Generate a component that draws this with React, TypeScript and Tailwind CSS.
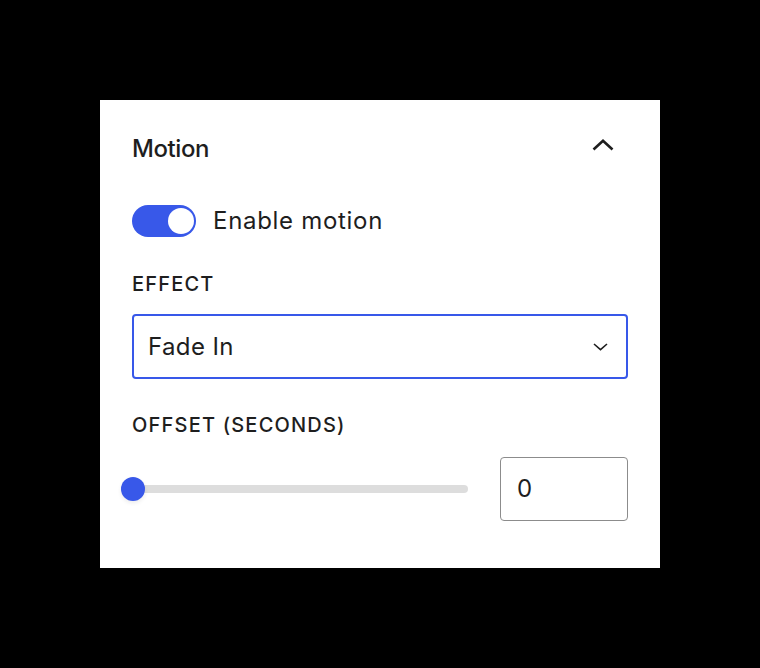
import React from 'react';

const font = { fontFamily: 'Inter, "Noto Sans", sans-serif' };

const App = () => {
  return (
    <div className="w-[760px] h-[668px] bg-black flex items-center justify-center" style={font}>
      <div className="w-[560px] h-[468px] bg-white px-8 pt-[33px] text-[#1e1e1e]">
        {/* Header */}
        <div className="flex items-start justify-between h-8">
          <span className="text-[24px] leading-8 font-medium tracking-[-0.4px]">Motion</span>
          <svg className="mt-[6px] mr-[14px]" width="22" height="12" viewBox="0 0 22 12" fill="none">
            <polyline points="1.5,10.5 11,1.8 20.5,10.5" stroke="#1e1e1e" strokeWidth="2.6" />
          </svg>
        </div>

        {/* Toggle */}
        <div className="flex items-center mt-10 h-8">
          <div className="w-16 h-8 rounded-full bg-[#3858e9] flex items-center justify-end pr-[2px]">
            <div className="w-[26px] h-[26px] rounded-full bg-white" />
          </div>
          <span className="ml-[17px] text-[24px] leading-8 tracking-[0.7px]">Enable motion</span>
        </div>

        {/* Effect */}
        <div className="mt-[33px] text-[20px] leading-7 font-medium uppercase tracking-[1.2px]">Effect</div>
        <div className="mt-[16px] h-[65px] border-2 border-[#3858e9] rounded flex items-center justify-between pl-[14px] pr-[18px]">
          <span className="text-[24px] leading-8 tracking-[0.4px]">Fade In</span>
          <svg width="15" height="8" viewBox="0 0 15 8" fill="none">
            <polyline points="1,1 7.5,6.6 14,1" stroke="#1e1e1e" strokeWidth="1.6" />
          </svg>
        </div>

        {/* Offset */}
        <div className="mt-8 text-[20px] leading-7 font-medium uppercase tracking-[1.2px]">Offset (seconds)</div>
        <div className="mt-[18px] flex items-center">
          <div className="relative flex-1 ml-[-11px] mr-8 h-6 flex items-center">
            <div className="w-full h-2 rounded-full bg-[#dddddd]" />
            <div className="absolute left-0 top-0 w-6 h-6 rounded-full bg-[#3858e9] shadow-[0_2px_4px_rgba(0,0,0,0.08)]" />
          </div>
          <div className="w-32 h-16 border border-[#8c8c8c] rounded flex items-center pl-4 text-[24px]">0</div>
        </div>
      </div>
    </div>
  );
};

export default App;
